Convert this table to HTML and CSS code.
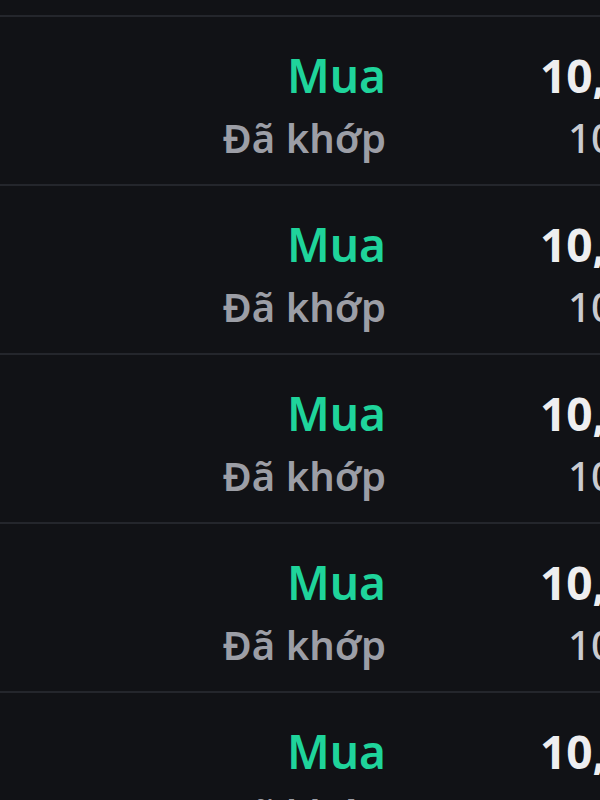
FILE: index.html
```html
<!DOCTYPE html>
<html lang="vi">
<head>
<meta charset="utf-8">
<link rel="stylesheet" href="styles.css">
</head>
<body>
<div class="list">
  <div class="top-stub"></div>
  <div class="row">
    <div class="side"><span class="type">Mua</span><span class="status">Đã khớp</span></div>
    <div class="nums"><span class="qty">10,000</span><span class="fill">10,000</span></div>
  </div>
  <div class="row">
    <div class="side"><span class="type">Mua</span><span class="status">Đã khớp</span></div>
    <div class="nums"><span class="qty">10,000</span><span class="fill">10,000</span></div>
  </div>
  <div class="row">
    <div class="side"><span class="type">Mua</span><span class="status">Đã khớp</span></div>
    <div class="nums"><span class="qty">10,000</span><span class="fill">10,000</span></div>
  </div>
  <div class="row">
    <div class="side"><span class="type">Mua</span><span class="status">Đã khớp</span></div>
    <div class="nums"><span class="qty">10,000</span><span class="fill">10,000</span></div>
  </div>
  <div class="row">
    <div class="side"><span class="type">Mua</span><span class="status">Đã khớp</span></div>
    <div class="nums"><span class="qty">10,000</span><span class="fill">10,000</span></div>
  </div>
</div>
</body>
</html>
```
FILE: styles.css
```css
html, body {
  margin: 0;
  padding: 0;
  background: #111216;
  overflow: hidden;
  width: 600px;
  height: 800px;
}
body {
  font-family: "Noto Sans", "DejaVu Sans", sans-serif;
}
.list {
  display: flex;
  flex-direction: column;
}
.top-stub {
  height: 15px;
  border-bottom: 2px solid #24262c;
}
.row {
  height: 167px;
  border-bottom: 2px solid #24262c;
  display: flex;
  flex-shrink: 0;
  white-space: nowrap;
}
.side {
  width: 386px;
  flex-shrink: 0;
  display: flex;
  flex-direction: column;
  align-items: flex-end;
}
.nums {
  flex-shrink: 0;
  margin-left: 154px;
  display: flex;
  flex-direction: column;
  align-items: flex-start;
}
.type {
  font-size: 46px;
  font-weight: 600;
  color: #1fd49b;
  line-height: 1;
  margin-top: 35px;
}
.status {
  font-size: 40px;
  font-weight: 600;
  color: #9c9ea6;
  line-height: 1;
  margin-top: 20px;
}
.qty {
  font-size: 46px;
  font-weight: 700;
  color: #eeeef0;
  line-height: 1;
  margin-top: 35px;
}
.fill {
  font-size: 40px;
  font-weight: 500;
  color: #c9cbd0;
  line-height: 1;
  margin-top: 20px;
  margin-left: 28px;
}
```
